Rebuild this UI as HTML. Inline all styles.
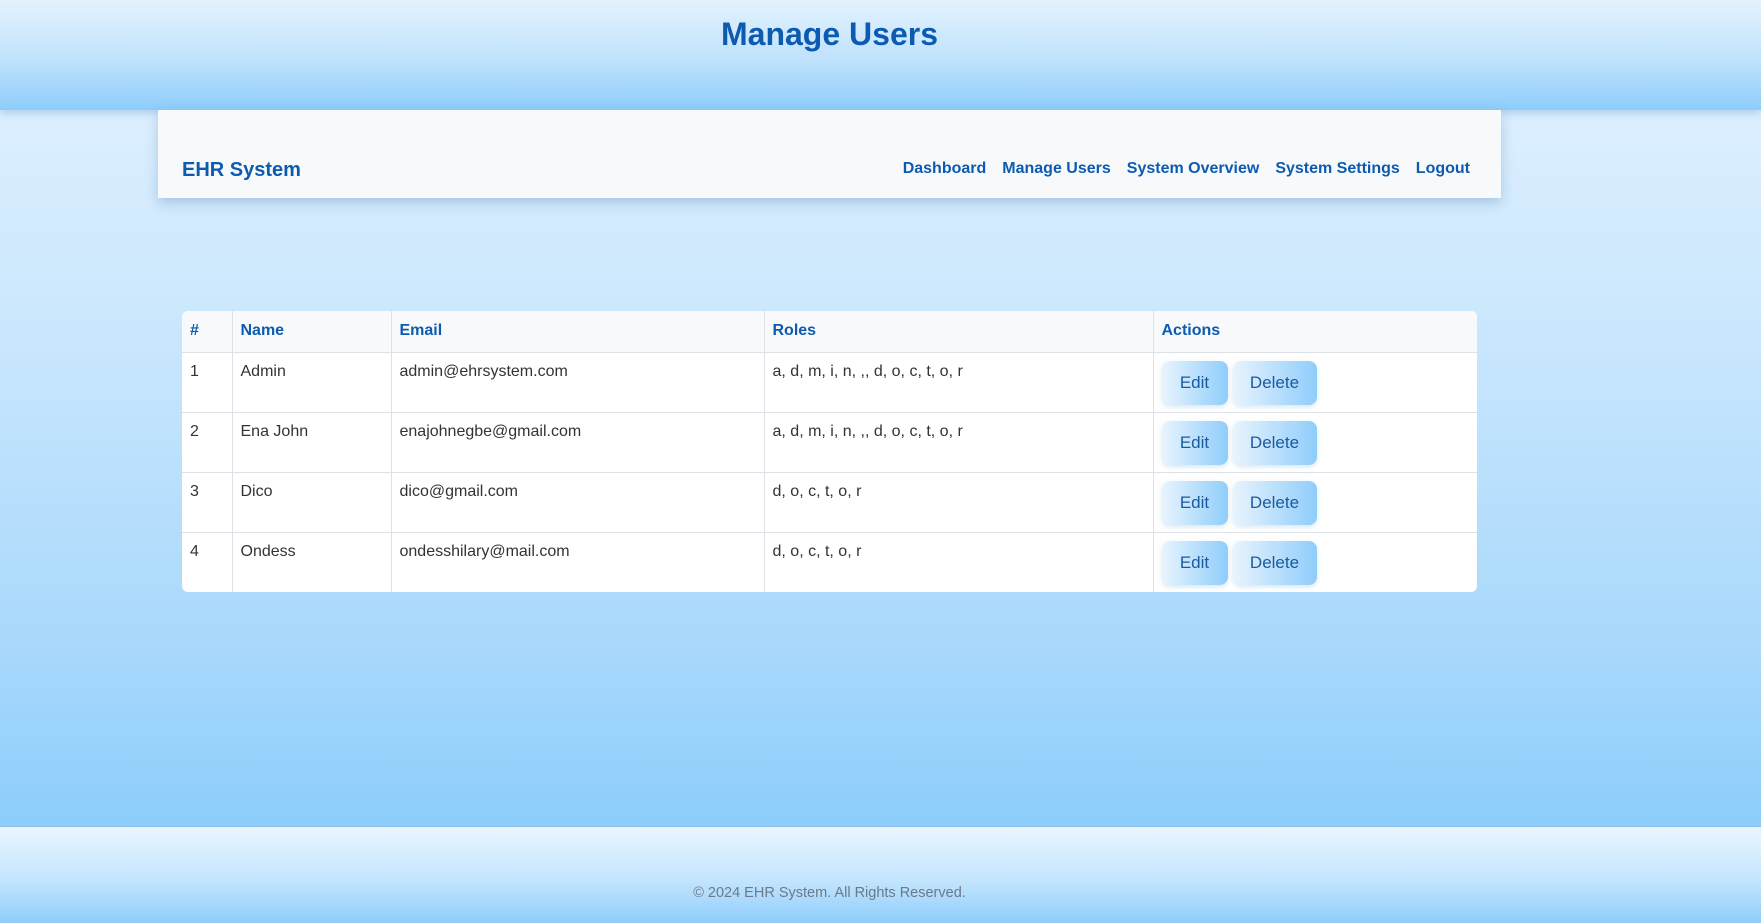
<!DOCTYPE html>
<html><head><meta charset="utf-8"><style>
*{box-sizing:border-box;margin:0;padding:0}
html,body{width:1761px;height:923px;overflow:hidden}
body{font-family:"Liberation Sans",Arial,sans-serif;background:linear-gradient(#dcefff 110px,#cde8fd 300px,#a8d8fc 650px,#8ccdfb 826px);position:relative}
.hdr{position:absolute;left:0;top:0;width:1761px;height:110px;background:linear-gradient(#e3f2fd,#bfe2fd 55%,#8ecdfb);box-shadow:0 3px 8px rgba(80,140,190,.35)}
.hdr h1{position:absolute;left:0;width:1659px;text-align:center;top:16px;font-size:32px;color:#0d5bb0;font-weight:bold}
.nav{position:absolute;left:158px;top:110px;width:1343px;height:88px;background:#f7f9fb;box-shadow:0 5px 12px rgba(60,110,160,.3)}
.brand{position:absolute;left:24px;top:49px;font-size:20px;font-weight:bold;color:#0d5bb0}
.links{position:absolute;right:31px;top:50px;font-size:16px;font-weight:bold;color:#0d5bb0}
.links span{margin-left:16px}
table{position:absolute;left:182px;top:311px;width:1295px;table-layout:fixed;border-collapse:collapse;background:#fff;border-radius:6px;overflow:hidden;font-size:16px}
th{background:#f7f9fb;color:#0d5bb0;text-align:left;height:41px;padding:0 8px;font-weight:bold;border-right:1px solid #dee2e6;border-bottom:1px solid #dee2e6}
td{height:60px;vertical-align:top;padding:10px 8px 0;color:#333;border-right:1px solid #dee2e6;border-bottom:1px solid #dee2e6}
th:last-child,td:last-child{border-right:none}
tr:last-child td{border-bottom:none}
td.a{padding-top:8px}
.b{display:inline-block;height:44px;line-height:44px;border-radius:8px;background:linear-gradient(90deg,#e8f4fe,#8fcdfb);color:#1a5aa0;font-size:17px;text-align:center;box-shadow:0 2px 5px rgba(100,160,210,.25);vertical-align:top}
.e{width:66px;margin-right:5px}.d{width:84px}
.ftr{position:absolute;left:0;top:826px;width:1761px;height:97px;background:linear-gradient(#eaf6ff,#c4e5fd 55%,#8ecdfb);border-top:1px solid #8cbfe6}
.ftr p{position:absolute;left:0;width:1659px;text-align:center;top:58px;font-size:14.5px;color:#6b7a8a}
</style></head><body>
<div class="hdr"><h1>Manage Users</h1></div>
<div class="nav"><div class="brand">EHR System</div>
<div class="links"><span>Dashboard</span><span>Manage Users</span><span>System Overview</span><span>System Settings</span><span>Logout</span></div></div>
<table>
<colgroup><col style="width:50px"><col style="width:159px"><col style="width:373px"><col style="width:389px"><col></colgroup>
<tr><th>#</th><th>Name</th><th>Email</th><th>Roles</th><th>Actions</th></tr>
<tr><td>1</td><td>Admin</td><td>admin@ehrsystem.com</td><td>a, d, m, i, n, ,, d, o, c, t, o, r</td><td class="a"><span class="b e">Edit</span><span class="b d">Delete</span></td></tr>
<tr><td>2</td><td>Ena John</td><td>enajohnegbe@gmail.com</td><td>a, d, m, i, n, ,, d, o, c, t, o, r</td><td class="a"><span class="b e">Edit</span><span class="b d">Delete</span></td></tr>
<tr><td>3</td><td>Dico</td><td>dico@gmail.com</td><td>d, o, c, t, o, r</td><td class="a"><span class="b e">Edit</span><span class="b d">Delete</span></td></tr>
<tr><td>4</td><td>Ondess</td><td>ondesshilary@mail.com</td><td>d, o, c, t, o, r</td><td class="a"><span class="b e">Edit</span><span class="b d">Delete</span></td></tr>
</table>
<div class="ftr"><p>© 2024 EHR System. All Rights Reserved.</p></div>
</body></html>
